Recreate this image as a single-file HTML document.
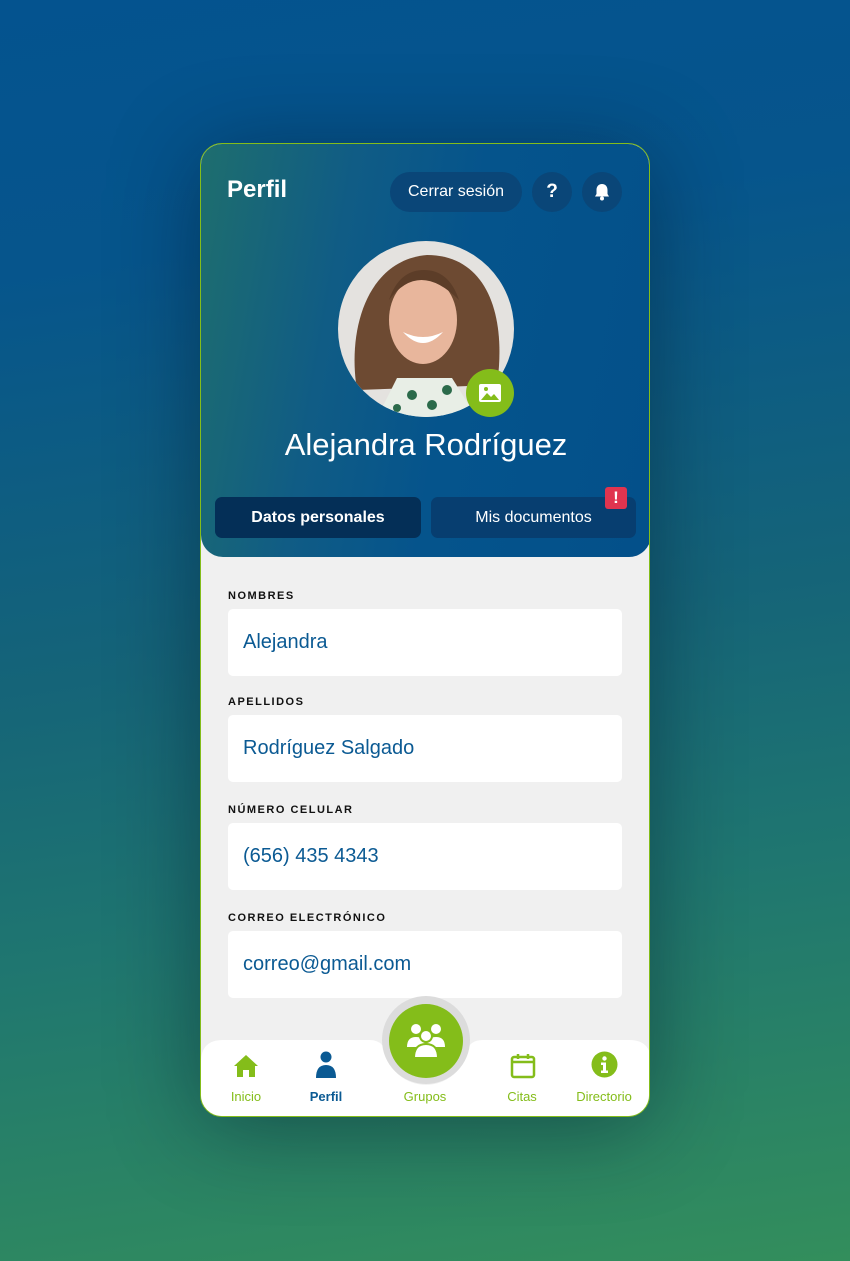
<!DOCTYPE html>
<html><head><meta charset="utf-8">
<style>
*{margin:0;padding:0;box-sizing:border-box}
body{width:850px;height:1261px;overflow:hidden;font-family:"Liberation Sans",sans-serif;
background:linear-gradient(172deg,#04538f 0%,#06558c 20%,#156478 50%,#1f7670 70%,#338e5c 100%);position:relative}
.card{position:absolute;left:200px;top:143px;width:450px;height:974px;border-radius:22px;background:#f0f0f0;overflow:hidden;border:1px solid #84bd1a;box-shadow:0 10px 90px rgba(0,20,40,.45)}
.head{position:absolute;left:0;top:0;width:450px;height:413px;border-radius:0 0 22px 22px;background:linear-gradient(100deg,#1e6e6e 0%,#105c85 30%,#05548c 55%,#03508a 100%)}
.title{position:absolute;left:26px;top:32px;color:#fff;font-weight:bold;font-size:24px}
.btn{position:absolute;top:28px;height:40px;background:#0a4678;border-radius:20px;color:#fff;font-size:16px;display:flex;align-items:center;justify-content:center}
.name{position:absolute;top:283px;width:100%;text-align:center;color:#fff;font-size:31px}
.tab{position:absolute;top:353px;height:41px;border-radius:7px;color:#fff;font-size:16px;display:flex;align-items:center;justify-content:center}
.lbl{position:absolute;left:27px;font-size:11px;font-weight:bold;letter-spacing:1.5px;color:#111}
.fld{position:absolute;left:27px;width:394px;height:67px;background:#fff;border-radius:5px;color:#0b5a93;font-size:20px;padding-left:15px;display:flex;align-items:center}
.nav{position:absolute;left:0;top:896px;width:450px;height:78px}
.ni{position:absolute;top:945px;font-size:13px;color:#84bd1a;text-align:center;width:80px}
</style></head><body>
<div class="card">
 <div class="head">
  <div class="title">Perfil</div>
  <div class="btn" style="left:189px;width:132px">Cerrar sesión</div>
  <div class="btn" style="left:331px;width:40px;font-weight:bold;font-size:19px">?</div>
  <div class="btn" style="left:381px;width:40px"><svg width="20" height="20" viewBox="0 0 20 20"><path d="M10 2c-3.5 0-5.5 2.5-5.5 6v4L3 14.5h14L15.5 12V8C15.5 4.5 13.5 2 10 2z" fill="#fff"/><circle cx="10" cy="16.5" r="2" fill="#fff"/></svg></div>
  <svg style="position:absolute;left:136px;top:96px" width="178" height="178" viewBox="0 0 178 178">
   <defs><clipPath id="c"><circle cx="89" cy="89" r="88"/></clipPath></defs>
   <g clip-path="url(#c)">
    <rect width="178" height="178" fill="#e4e2df"/>
    <path d="M20 150C10 90 30 20 90 15c60 0 80 60 70 130z" fill="#6d4a32"/>
    <ellipse cx="86" cy="80" rx="34" ry="44" fill="#e8b69c"/>
    <path d="M66 92q20 22 40 0q-20 10-40 0z" fill="#fff"/>
    <path d="M52 60q30-40 70 0q-10-30-35-30t-35 30z" fill="#5c3d28"/>
    <path d="M40 178l20-40h55l25 40z" fill="#e8eee6"/>
    <circle cx="75" cy="155" r="5" fill="#2b6a4a"/><circle cx="95" cy="165" r="5" fill="#2b6a4a"/><circle cx="110" cy="150" r="5" fill="#2b6a4a"/><circle cx="60" cy="168" r="4" fill="#2b6a4a"/>
   </g>
  </svg>
  <div style="position:absolute;left:265px;top:225px;width:48px;height:48px;border-radius:50%;background:#84bd1a;display:flex;align-items:center;justify-content:center"><svg width="24" height="20" viewBox="0 0 24 20"><rect x="1" y="1" width="22" height="18" rx="2" fill="#fff"/><path d="M3 17l6-7 4 4 3-3 5 6z" fill="#84bd1a"/><circle cx="8" cy="6" r="2" fill="#84bd1a"/></svg></div>
  <div class="name">Alejandra Rodríguez</div>
  <div class="tab" style="left:14px;width:206px;background:#042f57;font-weight:bold">Datos personales</div>
  <div class="tab" style="left:230px;width:205px;background:#073e70">Mis documentos</div>
  <div style="position:absolute;left:404px;top:343px;width:22px;height:22px;background:#e0344f;border-radius:3px;color:#fff;font-weight:bold;font-size:17px;text-align:center;line-height:22px">!</div>
 </div>
 <div class="lbl" style="top:446px">NOMBRES</div><div class="fld" style="top:465px">Alejandra</div>
 <div class="lbl" style="top:552px">APELLIDOS</div><div class="fld" style="top:571px">Rodríguez Salgado</div>
 <div class="lbl" style="top:660px">NÚMERO CELULAR</div><div class="fld" style="top:679px">(656) 435 4343</div>
 <div class="lbl" style="top:768px">CORREO ELECTRÓNICO</div><div class="fld" style="top:787px">correo@gmail.com</div>
 <svg class="nav" viewBox="0 0 450 78" width="450" height="78">
  <path d="M0 22Q0 0 22 0H168Q182 0 184 12A42 42 0 0 0 266 12Q268 0 282 0H428Q450 0 450 22V78H0Z" fill="#fff"/>
 </svg>
 <div style="position:absolute;left:181px;top:852px;width:88px;height:88px;border-radius:50%;background:#dcdcdc"></div>
 <div style="position:absolute;left:188px;top:860px;width:74px;height:74px;border-radius:50%;background:#84bd1a;display:flex;align-items:center;justify-content:center">
  <svg width="40" height="36" viewBox="0 0 40 36" fill="#fff"><circle cx="10" cy="6" r="5"/><circle cx="30" cy="6" r="5"/><path d="M1 24q0-10 9-10t9 10z"/><path d="M21 24q0-10 9-10t9 10z"/><circle cx="20" cy="13" r="6" stroke="#84bd1a" stroke-width="2"/><path d="M8 35q0-14 12-14t12 14z" stroke="#84bd1a" stroke-width="2"/></svg>
 </div>
 <svg style="position:absolute;left:32px;top:910px" width="26" height="24" viewBox="0 0 26 24" fill="#84bd1a"><path d="M13 1L1 12h3v11h6v-7h6v7h6V12h3z"/></svg>
 <svg style="position:absolute;left:115px;top:907px" width="20" height="27" viewBox="0 0 20 27" fill="#0b5a93"><circle cx="10" cy="6" r="5.5"/><path d="M0 27q0-13 10-13t10 13z"/></svg>
 <svg style="position:absolute;left:309px;top:909px" width="26" height="26" viewBox="0 0 26 26" fill="none" stroke="#84bd1a" stroke-width="2.5"><rect x="2" y="4" width="22" height="20" rx="2"/><path d="M2 9h22M8 1v5M18 1v5"/></svg>
 <svg style="position:absolute;left:390px;top:907px" width="27" height="27" viewBox="0 0 27 27"><circle cx="13.5" cy="13.5" r="13" fill="#84bd1a"/><circle cx="13.5" cy="7.5" r="2.2" fill="#fff"/><path d="M10 11.5h5v8h2v2.5h-7v-2.5h2v-5.5h-2z" fill="#fff"/></svg>
 <div class="ni" style="left:5px">Inicio</div>
 <div class="ni" style="left:85px;color:#0b5a93;font-weight:bold">Perfil</div>
 <div class="ni" style="left:184px">Grupos</div>
 <div class="ni" style="left:281px">Citas</div>
 <div class="ni" style="left:363px">Directorio</div>
</div>
</body></html>
